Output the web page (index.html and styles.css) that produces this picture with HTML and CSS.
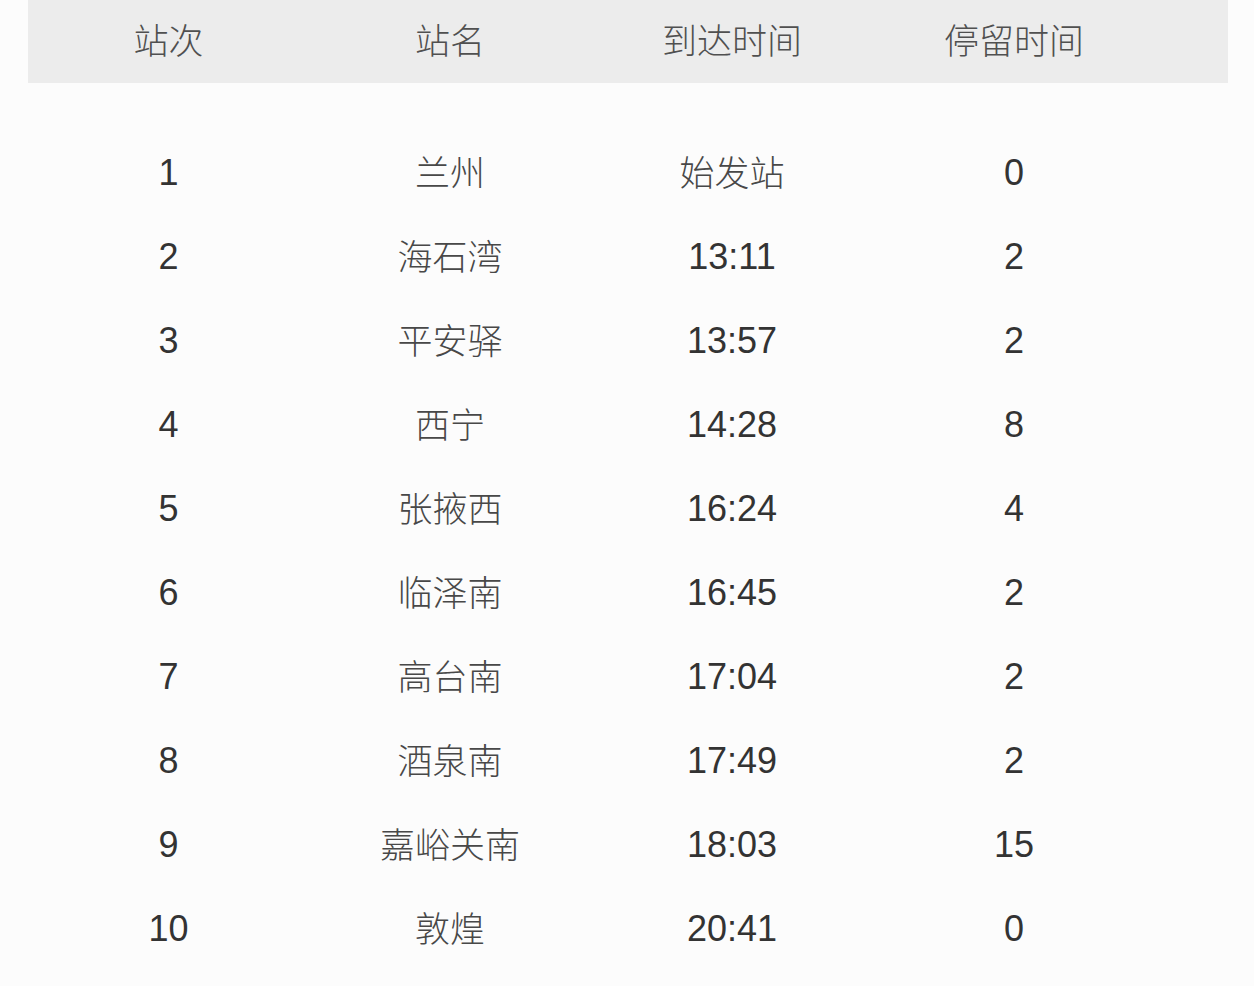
FILE: index.html
```html
<!DOCTYPE html>
<html lang="zh-CN">
<head>
<meta charset="utf-8">
<title>时刻表</title>
<link rel="stylesheet" href="styles.css">
</head>
<body>
<div class="table">
  <div class="row head">
    <div class="cell">站次</div>
    <div class="cell">站名</div>
    <div class="cell">到达时间</div>
    <div class="cell">停留时间</div>
  </div>
  <div class="body">
    <div class="row"><div class="cell num">1</div><div class="cell">兰州</div><div class="cell">始发站</div><div class="cell num">0</div></div>
    <div class="row"><div class="cell num">2</div><div class="cell">海石湾</div><div class="cell num">13:11</div><div class="cell num">2</div></div>
    <div class="row"><div class="cell num">3</div><div class="cell">平安驿</div><div class="cell num">13:57</div><div class="cell num">2</div></div>
    <div class="row"><div class="cell num">4</div><div class="cell">西宁</div><div class="cell num">14:28</div><div class="cell num">8</div></div>
    <div class="row"><div class="cell num">5</div><div class="cell">张掖西</div><div class="cell num">16:24</div><div class="cell num">4</div></div>
    <div class="row"><div class="cell num">6</div><div class="cell">临泽南</div><div class="cell num">16:45</div><div class="cell num">2</div></div>
    <div class="row"><div class="cell num">7</div><div class="cell">高台南</div><div class="cell num">17:04</div><div class="cell num">2</div></div>
    <div class="row"><div class="cell num">8</div><div class="cell">酒泉南</div><div class="cell num">17:49</div><div class="cell num">2</div></div>
    <div class="row"><div class="cell num">9</div><div class="cell">嘉峪关南</div><div class="cell num">18:03</div><div class="cell num">15</div></div>
    <div class="row"><div class="cell num">10</div><div class="cell">敦煌</div><div class="cell num">20:41</div><div class="cell num">0</div></div>
  </div>
</div>
</body>
</html>
```
FILE: styles.css
```css
html, body {
  margin: 0;
  padding: 0;
  background: #fcfcfc;
}
body {
  font-family: "Noto Sans CJK SC", "Liberation Sans", sans-serif;
  font-weight: 200;
  color: #484848;
}
.table {
  margin-left: 28px;
  width: 1200px;
}
.row {
  display: grid;
  grid-template-columns: 281px 282px 282px 282px 1fr;
  align-items: center;
  height: 84px;
}
.head {
  height: 83px;
  background: #ececec;
  color: #505050;
}
.body {
  padding-top: 48px;
}
.cell {
  text-align: center;
  font-size: 35px;
  line-height: 1;
  padding-bottom: 6px;
}
.num {
  font-family: "Liberation Sans", Arial, sans-serif;
  font-weight: 400;
  font-size: 36px;
  color: #333333;
  padding-bottom: 0;
}
```
